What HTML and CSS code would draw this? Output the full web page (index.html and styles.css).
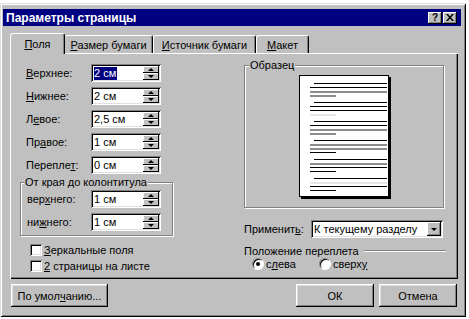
FILE: index.html
```html
<!DOCTYPE html>
<html>
<head>
<meta charset="utf-8">
<link rel="stylesheet" href="styles.css">
</head>
<body>
<div class="window">
  <div class="titlebar">
    <span class="title">Параметры страницы</span>
    <div class="tbtns">
      <div class="tbtn q">?</div>
      <div class="tbtn"><svg width="8" height="7" viewBox="0 0 8 7"><path d="M0 0h2l2 2.4L6 0h2L5 3.5 8 7H6L4 4.6 2 7H0l3-3.5z" fill="#000"/></svg></div>
    </div>
  </div>
  <div class="content">
    <div class="tabs">
      <div class="tab active t1"><span><u>П</u>оля</span></div>
      <div class="tab t2"><span><u>Р</u>азмер бумаги</span></div>
      <div class="tab t3"><span><u>И</u>сточник бумаги</span></div>
      <div class="tab t4"><span><u>М</u>акет</span></div>
    </div>
    <div class="panel">
      <div class="left">
        <div class="row"><span class="lbl"><u>В</u>ерхнее:</span><div class="spin"><span class="val"><span class="sel">2 см</span></span><div class="arrows"><div class="arr up"></div><div class="arr dn"></div></div></div></div>
        <div class="row"><span class="lbl"><u>Н</u>ижнее:</span><div class="spin"><span class="val">2 см</span><div class="arrows"><div class="arr up"></div><div class="arr dn"></div></div></div></div>
        <div class="row"><span class="lbl">Л<u>е</u>вое:</span><div class="spin"><span class="val">2,5 см</span><div class="arrows"><div class="arr up"></div><div class="arr dn"></div></div></div></div>
        <div class="row"><span class="lbl">Пр<u>а</u>вое:</span><div class="spin"><span class="val">1 см</span><div class="arrows"><div class="arr up"></div><div class="arr dn"></div></div></div></div>
        <div class="row"><span class="lbl">Перепле<u>т</u>:</span><div class="spin"><span class="val">0 см</span><div class="arrows"><div class="arr up"></div><div class="arr dn"></div></div></div></div>
        <div class="group hf">
          <div class="legend">От края до колонтитула</div>
          <div class="row in first"><span class="lbl">вер<u>х</u>него:</span><div class="spin"><span class="val">1 см</span><div class="arrows"><div class="arr up"></div><div class="arr dn"></div></div></div></div>
          <div class="row in last"><span class="lbl">ни<u>ж</u>него:</span><div class="spin"><span class="val">1 см</span><div class="arrows"><div class="arr up"></div><div class="arr dn"></div></div></div></div>
        </div>
        <div class="check first"><span class="box"></span><span><u>З</u>еркальные поля</span></div>
        <div class="check"><span class="box"></span><span><u>2</u> страницы на листе</span></div>
      </div>
      <div class="right">
        <div class="group sample">
          <div class="legend">Образец</div>
          <div class="page">
            <div class="para"><div class="l ind k"></div><div class="l k"></div><div class="l g"></div><div class="l sh g"></div></div>
            <div class="para"><div class="l ind k"></div><div class="l k"></div><div class="l k"></div><div class="l sh lt"></div></div>
            <div class="para"><div class="l ind k"></div><div class="l k"></div><div class="l g"></div><div class="l sh g"></div></div>
            <div class="para"><div class="l ind k"></div><div class="l g"></div><div class="l g"></div><div class="l sh k"></div></div>
            <div class="para"><div class="l ind k"></div><div class="l g"></div><div class="l k"></div><div class="l sh k"></div></div>
            <div class="para"><div class="l ind k"></div><div class="l lt"></div><div class="l k"></div><div class="l sh k"></div></div>
          </div>
        </div>
        <div class="apply"><span class="albl">Применит<u>ь</u>:</span><div class="combo"><span class="cval">К текущему разделу</span><div class="drop"></div></div></div>
        <div class="gutter"><span>Положение переплета</span><div class="etch"></div></div>
        <div class="radios">
          <div class="ritem r1"><span class="radio"><span class="dot"></span></span><span>с<u>л</u>ева</span></div>
          <div class="ritem"><span class="radio"></span><span>сверх<u>у</u></span></div>
        </div>
      </div>
    </div>
    <div class="buttons">
      <div class="btn b-def">По умол<u>ч</u>анию...</div>
      <div class="btn b-ok">ОК</div>
      <div class="btn b-cancel">Отмена</div>
    </div>
  </div>
</div>
</body>
</html>
```
FILE: styles.css
```css
* { box-sizing: border-box; }
html, body { margin: 0; padding: 0; background: #fff; }
body { font-family: "Liberation Sans", Arial, sans-serif; font-size: 11px; color: #000; }
u { text-decoration: underline; text-underline-offset: 1px; }

.window {
  margin-top: 3px;
  width: 466px;
  height: 314px;
  background: #c0c0c0;
  padding: 6px 5px 0 3px;
  box-shadow: inset 1px 1px #dfdfdf, inset -1px -1px #000, inset 2px 2px #fff, inset -2px -2px #808080;
}

.titlebar {
  height: 17px;
  background: #000080;
  color: #fff;
  display: flex;
  align-items: center;
  justify-content: space-between;
  padding: 0 4px 0 3px;
}
.title { font-weight: bold; font-size: 12px; }
.tbtns { display: flex; gap: 1px; }
.tbtn {
  width: 14px; height: 12px;
  background: #c0c0c0;
  box-shadow: inset -1px -1px #000, inset 1px 1px #fff, inset -2px -2px #808080;
  display: flex; align-items: center; justify-content: center;
  color: #000; font-weight: bold; font-size: 10px; line-height: 10px;
}
.tbtn svg { display: block; }

.content { margin: 7px 0 0 7px; width: 448px; }

.tabs { display: flex; align-items: flex-end; height: 21px; margin-bottom: -1px; position: relative; z-index: 1; }
.tab {
  height: 18px;
  margin-bottom: 1px;
  display: flex; align-items: center; justify-content: center;
  background: #c0c0c0;
  border-style: solid;
  border-width: 1px 1px 0 1px;
  border-color: #fff #000 transparent #fff;
  border-radius: 3px 3px 0 0;
  box-shadow: inset -1px 0 #808080;
}
.tab.active { height: 21px; margin-bottom: 0; padding-bottom: 1px; }
.t1 { width: 55px; }
.t2 { width: 88px; border-left: 0; }
.t3 { width: 103px; }
.t4 { width: 53px; }

.panel {
  height: 226px;
  background: #c0c0c0;
  box-shadow: inset 1px 1px #fff, inset -1px -1px #000, inset -2px -2px #808080;
  display: grid;
  grid-template-columns: 224px 202px;
  padding: 11px 12px 0 10px;
}

.left { display: flex; flex-direction: column; }
.row { display: flex; align-items: center; height: 18px; margin-bottom: 5px; padding-left: 6px; }
.lbl { width: 65px; }
.row.in .lbl { width: 64px; }
.row.in.first { margin-top: 1px; }
.row.in.last { margin-bottom: 0; }

.spin {
  width: 70px; height: 18px;
  background: #fff;
  box-shadow: inset 1px 1px #808080, inset -1px -1px #fff, inset 2px 2px #000, inset -2px -2px #dfdfdf;
  display: flex;
  padding: 2px;
}
.val { flex: 1; display: flex; align-items: center; padding-left: 1px; }
.sel { background: #000080; color: #fff; padding: 0 1px 0 0; line-height: 13px; }
.arrows { width: 16px; display: flex; flex-direction: column; }
.arr {
  flex: 1;
  background: #c0c0c0;
  box-shadow: inset -1px -1px #000, inset 1px 1px #fff;
  display: flex; align-items: center; justify-content: center;
}
.arr::before { content: ""; border-left: 3px solid transparent; border-right: 3px solid transparent; }
.up::before { border-bottom: 3px solid #000; }
.dn::before { border-top: 3px solid #000; }

.group {
  border: 1px solid #808080;
  box-shadow: 1px 1px 0 #fff, inset 1px 1px 0 #fff;
}
.legend {
  margin: -7px 0 0 3px;
  padding: 0 1px;
  background: #c0c0c0;
  width: fit-content;
  height: 13px;
  line-height: 13px;
}
.hf { width: 153px; margin-top: 3px; padding-bottom: 4px; }

.check { display: flex; align-items: center; height: 12px; padding-left: 10px; margin-bottom: 4px; }
.check.first { margin-top: 8px; }
.box {
  width: 12px; height: 12px;
  background: #fff;
  box-shadow: inset 1px 1px #808080, inset -1px -1px #fff, inset 2px 2px #000, inset -2px -2px #dfdfdf;
  margin-right: 2px;
}

.right { display: flex; flex-direction: column; padding-top: 1px; }
.sample { width: 200px; height: 143px; }
.sample .legend { margin-left: 4px; }
.page {
  width: 90px; height: 122px;
  margin: 3px auto 0;
  background: #fff;
  border: 1px solid #000;
  box-shadow: 2px 2px 0 #000;
  padding: 7px 1px 0 10px;
}
.para { display: flex; flex-direction: column; gap: 2px; margin-bottom: 5px; }
.l { height: 2px; }
.ind { margin-left: 4px; }
.sh { width: 26px; }
.k { background: linear-gradient(#000 1px, transparent 1px); }
.g { background: #8c8c8c; }
.lt { background: #e6e6e6; }

.apply { display: flex; align-items: center; margin-top: 12px; height: 18px; }
.albl { width: 67px; }
.combo {
  width: 132px; height: 18px;
  background: #fff;
  box-shadow: inset 1px 1px #808080, inset -1px -1px #fff, inset 2px 2px #000, inset -2px -2px #dfdfdf;
  display: flex; padding: 2px;
}
.cval { flex: 1; display: flex; align-items: center; padding-left: 1px; }
.drop {
  width: 14px;
  background: #c0c0c0;
  box-shadow: inset -1px -1px #000, inset 1px 1px #fff, inset -2px -2px #808080;
  display: flex; align-items: center; justify-content: center;
}
.drop::before { content: ""; border-left: 3px solid transparent; border-right: 3px solid transparent; border-top: 3px solid #000; }

.gutter { display: flex; align-items: center; margin-top: 6px; height: 13px; }
.etch { flex: 1; margin-left: 5px; height: 2px; border-top: 1px solid #808080; border-bottom: 1px solid #fff; }

.radios { display: flex; align-items: center; height: 13px; padding-left: 8px; }
.ritem { display: flex; align-items: center; }
.r1 { width: 67px; }
.radio {
  width: 12px; height: 12px;
  border-radius: 50%;
  background: #fff;
  border: 1px solid;
  border-color: #808080 #fff #fff #808080;
  box-shadow: inset 1px 1px #000;
  margin-right: 2px;
  display: flex; align-items: center; justify-content: center;
}
.dot { width: 4px; height: 4px; border-radius: 50%; background: #000; }

.buttons { display: flex; margin-top: 5px; padding: 0 1px; }
.btn {
  height: 23px;
  display: flex; align-items: center; justify-content: center;
  background: #c0c0c0;
  box-shadow: inset -1px -1px #000, inset 1px 1px #fff, inset -2px -2px #808080, inset 2px 2px #dfdfdf;
}
.b-def { width: 97px; }
.b-ok { width: 78px; margin-left: auto; }
.b-cancel { width: 78px; margin-left: 5px; }
```
